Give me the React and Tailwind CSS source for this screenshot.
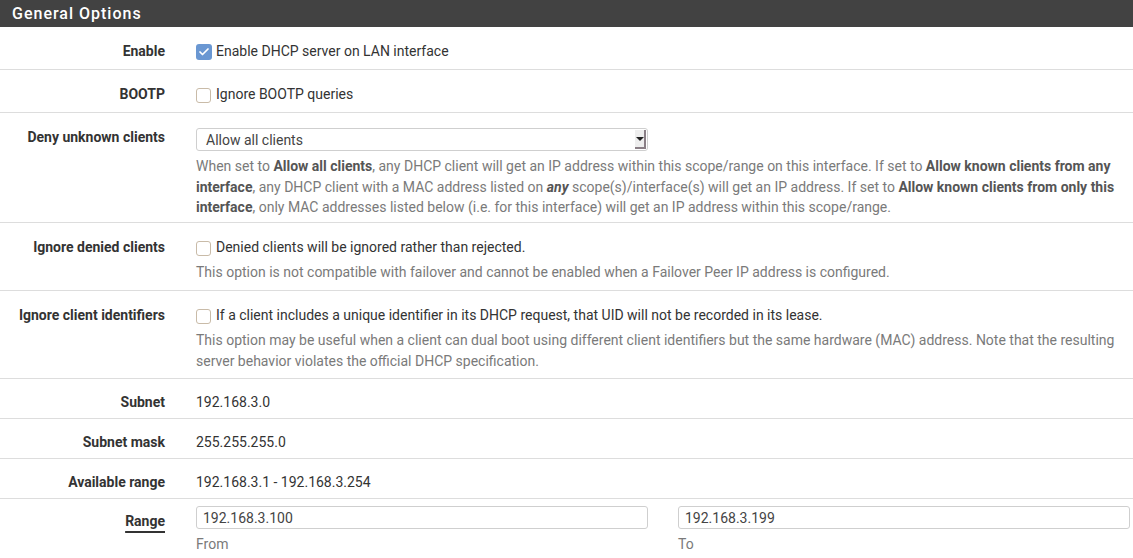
import { Check } from 'lucide-react';

const font = { fontFamily: 'Roboto, "Liberation Sans", sans-serif' };

const Box = ({ checked }) =>
  checked ? (
    <span className="inline-flex items-center justify-center w-[16px] h-[16px] rounded-[3px] bg-[#6a97d2] mr-[4px] mt-[3px] shrink-0">
      <Check size={12} strokeWidth={3.5} className="text-white" />
    </span>
  ) : (
    <span className="inline-block w-[15px] h-[15px] rounded-[3px] border border-[#c9bba8] bg-white mr-[5px] mt-[4px] shrink-0" />
  );

const Row = ({ label, children, className = 'pt-[14px] pb-[8px]', underline = false }) => (
  <div className={`flex border-b border-[#dddddd] ${className}`}>
    <div className="w-[181px] pr-4 text-right text-[14px] leading-[20px] font-bold text-[#333]">
      {underline ? (
        <span className="underline decoration-[2px] underline-offset-[5px]">{label}</span>
      ) : (
        label
      )}
    </div>
    <div className="flex-1 pl-[15px] pr-[3px] text-[14px] leading-[20px] text-[#333]">{children}</div>
  </div>
);

const Help = ({ children, className = 'mt-[5px]' }) => (
  <p className={`text-[#7a7a7a] leading-[20.5px] ${className}`}>{children}</p>
);

export default function App() {
  return (
    <div className="w-[1133px] h-[558px] overflow-hidden bg-white" style={font}>
      <div className="h-[27px] bg-[#424242] flex items-center pl-[12px]">
        <h2 className="text-white text-[16px] font-medium tracking-[1px]">General Options</h2>
      </div>

      <Row label="Enable">
        <label className="flex">
          <Box checked />
          <span>Enable DHCP server on LAN interface</span>
        </label>
      </Row>

      <Row label="BOOTP">
        <label className="flex">
          <Box />
          <span>Ignore BOOTP queries</span>
        </label>
      </Row>

      <Row label="Deny unknown clients" className="pt-[14px] pb-[4px]">
        <div className="w-[452px] h-[23px] mt-[1px] flex items-center border border-[#cfcfcf] rounded-[3px] pl-[9px] text-[#444]">
          <span className="flex-1">Allow all clients</span>
          <span className="w-[11px] h-[19px] mr-[1px] flex items-center justify-center bg-[#eeeeee] border-r-2 border-b-2 border-[#8a7f86]">
            <span className="w-0 h-0 border-l-[4px] border-r-[4px] border-t-[4px] border-l-transparent border-r-transparent border-t-[#222]" />
          </span>
        </div>
        <Help>
          When set to <b className="text-[#555]">Allow all clients</b>, any DHCP client will get an IP address within this
          scope/range on this interface. If set to <b className="text-[#555]">Allow known clients from any interface</b>,
          any DHCP client with a MAC address listed on <b className="italic text-[#555]">any</b> scope(s)/interface(s) will get
          an IP address. If set to <b className="text-[#555]">Allow known clients from only this interface</b>, only MAC
          addresses listed below (i.e. for this interface) will get an IP address within this scope/range.
        </Help>
      </Row>

      <Row label="Ignore denied clients" className="pt-[14px] pb-[8px]">
        <label className="flex">
          <Box />
          <span>Denied clients will be ignored rather than rejected.</span>
        </label>
        <Help>
          This option is not compatible with failover and cannot be enabled when a Failover Peer IP address is configured.
        </Help>
      </Row>

      <Row label="Ignore client identifiers" className="pt-[14px] pb-[7px]">
        <label className="flex">
          <Box />
          <span>If a client includes a unique identifier in its DHCP request, that UID will not be recorded in its lease.</span>
        </label>
        <Help>
          This option may be useful when a client can dual boot using different client identifiers but the same hardware
          (MAC) address. Note that the resulting server behavior violates the official DHCP specification.
        </Help>
      </Row>

      <Row label="Subnet" className="pt-[13px] pb-[6px]">192.168.3.0</Row>
      <Row label="Subnet mask" className="pt-[13px] pb-[6px]">255.255.255.0</Row>
      <Row label="Available range" className="pt-[13px] pb-[6px]">192.168.3.1 - 192.168.3.254</Row>

      <Row label="Range" underline className="pt-[12px] pb-[6px]">
        <div className="grid grid-cols-2 gap-[30px] -mt-[5px]">
          <div>
            <div className="h-[23px] flex items-center border border-[#cfcfcf] rounded-[3px] pl-[6px] text-[#444]">
              192.168.3.100
            </div>
            <div className="mt-[5px] text-[#7a7a7a]">From</div>
          </div>
          <div>
            <div className="h-[23px] flex items-center border border-[#cfcfcf] rounded-[3px] pl-[6px] text-[#444]">
              192.168.3.199
            </div>
            <div className="mt-[5px] text-[#7a7a7a]">To</div>
          </div>
        </div>
      </Row>
    </div>
  );
}
